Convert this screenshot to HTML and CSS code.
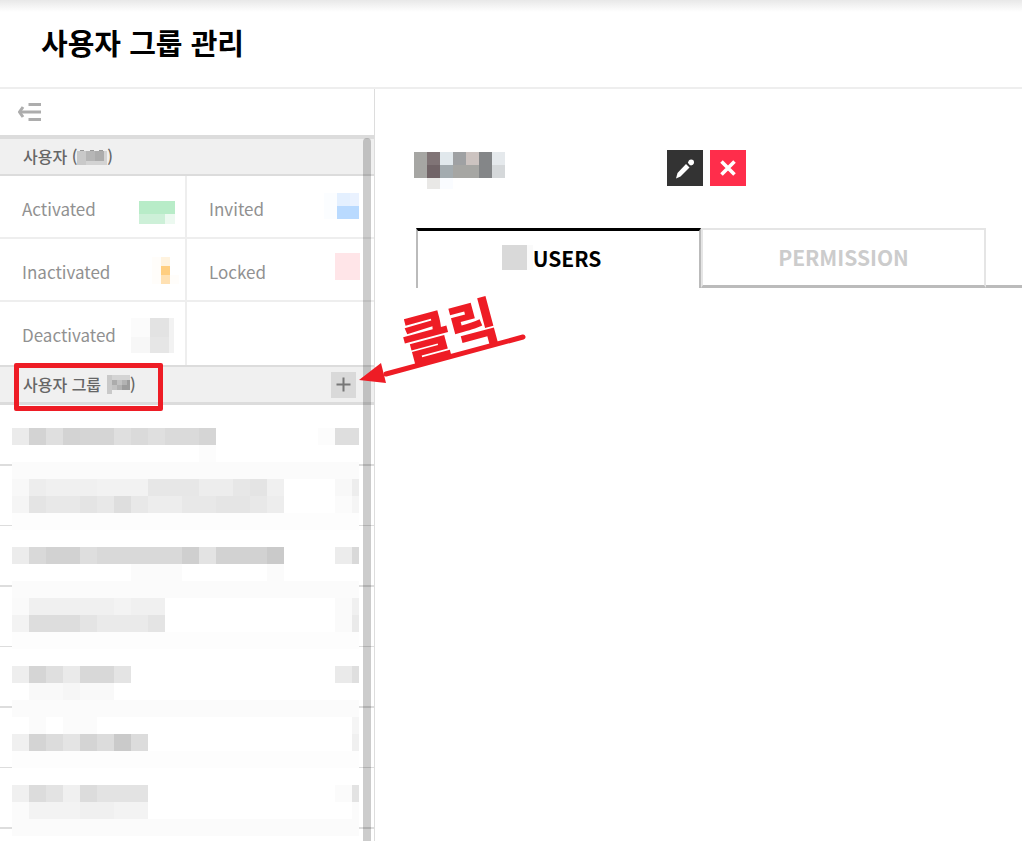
FILE: index.html
```
<!DOCTYPE html>
<html lang="ko">
<head>
    <meta charset="UTF-8">
    <meta name="viewport" content="width=device-width, initial-scale=1.0">
    <title>사용자 그룹 관리</title>
    <link rel="stylesheet" href="styles.css">
</head>
<body>
    <header class="page-header">
        <h1>사용자 그룹 관리</h1>
    </header>

    <div class="layout">
        <aside class="sidebar">
            <div class="sidebar-tools">
                <button class="collapse-btn" type="button" aria-label="Collapse">
                    <svg width="24" height="20" viewBox="0 0 24 20" fill="none" stroke="#adadad" stroke-width="3">
                        <path d="M10.500 2.500h12.500M3 10h20M10.500 17.500h12.500"/>
                        <path d="M5 5L1.500 10l3.500 5"/>
                    </svg>
                </button>
            </div>

            <div class="panel">
                <h2 class="panel-title first">
                    <span>사용자 (</span>
                    <svg class="mosaic" width="30" height="16" viewBox="0 0 30 16">
                        <path fill="#c9c9c9" d="M0 2h9v14H0z"/>
                        <path fill="#b6b6b6" d="M9 2h9v10H9z"/>
                        <path fill="#acacac" d="M18 2h9v10h-9z"/>
                        <path fill="#d3d3d3" d="M9 12h21v4H9zM27 2h3v10h-3z"/>
                        <path fill="#999" d="M3 1h4v1H3zM13 1h4v1h-4zM22 1h4v1h-4z"/>
                    </svg>
                    <span>)</span>
                </h2>
                <div class="status-grid">
                    <a class="status" href="#activated">Activated
                        <svg class="mosaic" width="60" height="61" viewBox="0 0 60 61">
                            <path fill="#b8ecc8" d="M14 25h36v13H14z"/>
                            <path fill="#cdf0d8" d="M14 38h26v10H14z"/>
                            <path fill="#ecf9f0" d="M40 38h10v10H40z"/>
                        </svg>
                    </a>
                    <a class="status" href="#invited">Invited
                        <svg class="mosaic" width="60" height="61" viewBox="0 0 60 61">
                            <path fill="#fbfdff" d="M24 17h13v26H24z"/>
                            <path fill="#e4f0ff" d="M37 17h13v13H37z"/>
                            <path fill="#eaf2ff" d="M50 17h9v13h-9z"/>
                            <path fill="#b9daff" d="M37 30h22v13H37z"/>
                        </svg>
                    </a>
                    <a class="status" href="#inactivated">Inactivated
                        <svg class="mosaic" width="60" height="61" viewBox="0 0 60 61">
                            <path fill="#fffdfa" d="M27 18h9v27h-9zM45 36h9v9h-9z"/>
                            <path fill="#fff3df" d="M36 18h9v9h-9z"/>
                            <path fill="#ffce80" d="M36 27h9v9h-9z"/>
                            <path fill="#ffe1b3" d="M36 36h9v9h-9z"/>
                        </svg>
                    </a>
                    <a class="status" href="#locked">Locked
                        <svg class="mosaic" width="60" height="61" viewBox="0 0 60 61">
                            <path fill="#ffe5e8" d="M35 14h25v27H35z"/>
                        </svg>
                    </a>
                    <a class="status" href="#deactivated">Deactivated
                        <svg class="mosaic" width="60" height="61" viewBox="0 0 60 61">
                            <path fill="#fbfbfb" d="M6 16h19v19H6z"/>
                            <path fill="#f7f7f7" d="M6 35h19v16H6z"/>
                            <path fill="#e3e3e3" d="M25 16h19v19H25z"/>
                            <path fill="#e6e6e6" d="M25 35h19v16H25z"/>
                            <path fill="#f2f2f2" d="M44 16h5v35h-5z"/>
                        </svg>
                    </a>
                    <div class="status"></div>
                </div>

                <h2 class="panel-title groups">
                    <span>사용자 그룹</span>
                    <svg class="mosaic group-count" width="23" height="19" viewBox="0 0 23 19">
                        <path fill="#c9c9c9" d="M0 0h5v19H0zM15 14h8v1h-8z"/>
                        <path fill="#d4d4d4" d="M5 0h18v5H5z"/>
                        <path fill="#acacac" d="M5 5h5v5H5z"/>
                        <path fill="#c2c2c2" d="M10 5h5v5h-5zM5 10h5v5H5z"/>
                        <path fill="#b2b2b2" d="M15 5h5v5h-5zM10 10h5v5h-5z"/>
                        <path fill="#9c9c9c" d="M15 10h8v5h-8zM20 5h3v5h-3z"/>
                    </svg>
                    <span>)</span>
                    <button class="add-btn" type="button" aria-label="Add group">
                        <svg width="15" height="15" viewBox="0 0 15 15" stroke="#777" stroke-width="2">
                            <path d="M7.500 0.500v14M0.500 7.500h14"/>
                        </svg>
                    </button>
                    <span class="highlight"></span>
                </h2>

                <div class="group-area">
                    <ul class="group-list">
                        <li></li>
                        <li></li>
                        <li></li>
                        <li></li>
                        <li></li>
                        <li></li>
                        <li></li>
                    </ul>
                    <!-- masked group names, one unit per block -->
                    <svg class="mosaic group-mask" width="347" height="425" viewBox="0 0 347 425">
                        <path fill="#fff" d="M0 0h347v425H0z"/>
                        <g transform="scale(17)">
                            <path stroke="#fbfbfb" d="M0 3.500h21M0 10.500h21M0 17.500h21M0 24.500h21"/>
                            <path stroke="#fdfdfd" d="M0 6.500h21M0 13.500h21M0 20.500h21"/>

                            <path stroke="#ebebeb" d="M0 1.500h1"/>
                            <path stroke="#d3d3d3" d="M1 1.500h1M3 1.500h1"/>
                            <path stroke="#dfdfdf" d="M2 1.500h1M6 1.500h1M8 1.500h1"/>
                            <path stroke="#d5d5d5" d="M4 1.500h2M11 1.500h1"/>
                            <path stroke="#dadada" d="M7 1.500h1M9 1.500h2"/>
                            <path stroke="#fcfcfc" d="M11 2.500h1M18 1.500h1"/>
                            <path stroke="#dedede" d="M19 1.500h2"/>

                            <path stroke="#f8f8f8" d="M0 4.500h1M19 4.500h1"/>
                            <path stroke="#ededed" d="M1 4.500h1M11 4.500h2M20 4.500h1M8 5.500h2M15 5.500h1"/>
                            <path stroke="#f0f0f0" d="M2 4.500h3M15 4.500h1"/>
                            <path stroke="#f2f2f2" d="M5 4.500h3"/>
                            <path stroke="#e7e7e7" d="M8 4.500h3M13 4.500h1"/>
                            <path stroke="#e4e4e4" d="M14 4.500h1M1 5.500h1M4 5.500h1"/>
                            <path stroke="#f5f5f5" d="M0 5.500h1M20 5.500h1"/>
                            <path stroke="#e8e8e8" d="M2 5.500h2M5 5.500h1M7 5.500h1M10 5.500h2M14 5.500h1"/>
                            <path stroke="#dedede" d="M6 5.500h1"/>
                            <path stroke="#e5e5e5" d="M12 5.500h2"/>
                            <path stroke="#fbfbfb" d="M19 5.500h1"/>

                            <path stroke="#ececec" d="M0 8.500h1M19 8.500h1"/>
                            <path stroke="#d9d9d9" d="M1 8.500h1M5 8.500h5M20 8.500h1"/>
                            <path stroke="#d2d2d2" d="M2 8.500h2M12 8.500h3"/>
                            <path stroke="#dedede" d="M4 8.500h1"/>
                            <path stroke="#cfcfcf" d="M10 8.500h1"/>
                            <path stroke="#e3e3e3" d="M11 8.500h1"/>
                            <path stroke="#cacaca" d="M15 8.500h1"/>
                            <path stroke="#fbfbfb" d="M7 9.500h3M15 9.500h1"/>

                            <path stroke="#fafafa" d="M0 11.500h1M19 11.500h1M19 12.500h1"/>
                            <path stroke="#f0f0f0" d="M1 11.500h8M20 11.500h1"/>
                            <path stroke="#f3f3f3" d="M6 11.500h1M0 12.500h1"/>
                            <path stroke="#dddddd" d="M1 12.500h3"/>
                            <path stroke="#e4e4e4" d="M4 12.500h1M8 12.500h1"/>
                            <path stroke="#eaeaea" d="M5 12.500h3M20 12.500h1"/>

                            <path stroke="#eeeeee" d="M0 15.500h1"/>
                            <path stroke="#d5d5d5" d="M1 15.500h1"/>
                            <path stroke="#dfdfdf" d="M2 15.500h1M20 15.500h1"/>
                            <path stroke="#eaeaea" d="M3 15.500h1M19 15.500h1"/>
                            <path stroke="#d8d8d8" d="M4 15.500h2"/>
                            <path stroke="#e4e4e4" d="M6 15.500h1"/>
                            <path stroke="#f9f9f9" d="M1 16.500h5"/>
                            <path stroke="#f6f6f6" d="M3 16.500h1"/>

                            <path stroke="#fbfbfb" d="M1 18.500h1M3 18.500h2"/>
                            <path stroke="#f5f5f5" d="M20 18.500h1"/>
                            <path stroke="#f0f0f0" d="M0 19.500h1M20 19.500h1"/>
                            <path stroke="#d4d4d4" d="M1 19.500h1M4 19.500h1"/>
                            <path stroke="#dcdcdc" d="M2 19.500h1M5 19.500h1M7 19.500h1"/>
                            <path stroke="#e4e4e4" d="M3 19.500h1"/>
                            <path stroke="#cacaca" d="M6 19.500h1"/>

                            <path stroke="#f0f0f0" d="M0 22.500h1M3 22.500h1M4 23.500h2"/>
                            <path stroke="#dcdcdc" d="M1 22.500h1M4 22.500h1"/>
                            <path stroke="#e3e3e3" d="M2 22.500h1M5 22.500h3M20 22.500h1"/>
                            <path stroke="#fbfbfb" d="M0 23.500h1M19 22.500h1M20 23.500h1"/>
                            <path stroke="#f3f3f3" d="M1 23.500h3M6 23.500h2"/>
                        </g>
                    </svg>
                </div>
                <div class="scrollbar"></div>
            </div>
        </aside>

        <main class="content">
            <div class="group-head">
                <svg class="mosaic" width="91" height="39" viewBox="0 -2 91 39">
                    <path fill="#a6a6a3" d="M0 0h13v26H0zM39 13h26v13H39z"/>
                    <path fill="#807476" d="M13 0h13v13H13z"/>
                    <path fill="#716467" d="M13 13h13v13H13z"/>
                    <path fill="#e1e8ec" d="M26 0h13v13H26z"/>
                    <path fill="#a3abaf" d="M26 13h13v13H26z"/>
                    <path fill="#9fa1a3" d="M39 0h13v13H39z"/>
                    <path fill="#ccc3c0" d="M52 0h13v13H52z"/>
                    <path fill="#848688" d="M65 0h13v26H65z"/>
                    <path fill="#e5e9ec" d="M78 0h13v13H78z"/>
                    <path fill="#d5d8da" d="M78 13h13v13H78z"/>
                    <path fill="#e9e8e6" d="M13 26h13v11H13z"/>
                    <path fill="#fafcff" d="M26 26h13v11H26z"/>
                </svg>
                <div class="actions">
                    <button class="icon-btn edit" type="button" aria-label="Edit">
                        <svg width="36" height="36" viewBox="0 0 36 36" fill="#fff">
                            <path d="M9 28.500l1.500-5.500L19 14l3.500 3.500L13.500 26.500z"/>
                            <circle cx="24.200" cy="12.200" r="2.800"/>
                            <path d="M20.800 12.600l1.400-1.400 3.200 3.200-1.400 1.400z"/>
                        </svg>
                    </button>
                    <button class="icon-btn delete" type="button" aria-label="Delete">
                        <svg width="36" height="36" viewBox="0 0 36 36" stroke="#fff" stroke-width="3.600">
                            <path d="M11.500 11.500l13 13M24.500 11.500l-13 13"/>
                        </svg>
                    </button>
                </div>
            </div>

            <nav class="tabs">
                <button class="tab active" type="button">
                    <svg class="mosaic" width="31" height="25" viewBox="0 0 31 25">
                        <path fill="#d9d9d9" d="M0 0h25v25H0z"/>
                        <path fill="#fafafa" d="M25 0h6v25h-6z"/>
                    </svg>
                    <span>USERS</span>
                </button>
                <button class="tab" type="button">PERMISSION</button>
            </nav>
        </main>
    </div>

    <!-- callout pointing at the add button -->
    <svg class="callout" width="180" height="110" viewBox="0 0 180 110">
        <text class="callout-text" transform="translate(48 83) rotate(-15)">클릭</text>
        <path d="M26 94L163 57" stroke="#ee1c25" stroke-width="5" stroke-linecap="round"/>
        <path d="M-1 100L21 83l5 20z" fill="#ee1c25"/>
    </svg>
</body>
</html>
```

FILE: styles.css
```
* {
    box-sizing: border-box;
}

body {
    margin: 0;
    min-height: 100vh;
    display: flex;
    flex-direction: column;
    position: relative;
    background-color: #fff;
    color: #000;
    font-family: "Noto Sans CJK KR", sans-serif;
}

button {
    padding: 0;
    border: none;
    background: none;
    font-family: inherit;
    cursor: pointer;
}

svg {
    display: block;
    flex: none;
}

.mosaic {
    shape-rendering: crispEdges;
}

.page-header {
    padding: 20px 41px 23px;
    border-bottom: 2px solid #eee;
    background: linear-gradient(#e8e8e8, #fff 12px);
}

h1 {
    margin: 0;
    font-size: 29px;
    line-height: 44px;
    font-weight: 700;
}

.layout {
    flex: 1;
    display: flex;
}

/* sidebar */
.sidebar {
    flex: none;
    width: 375px;
    display: flex;
    flex-direction: column;
    border-right: 1px solid #ddd;
}

.sidebar-tools {
    padding: 13px 18px;
}

.collapse-btn {
    display: block;
}

.panel {
    flex: 1;
    position: relative;
    border-top: 4px solid #dcdcdc;
}

.panel-title {
    display: flex;
    align-items: center;
    height: 37px;
    margin: 0;
    padding: 0 18px 0 23px;
    background-color: #f0f0f0;
    border-bottom: 2px solid #dcdcdc;
    color: #666;
    font-size: 16px;
    line-height: 24px;
    font-weight: 500;
}

.panel-title span {
    padding-bottom: 2px;
}

.panel-title.groups {
    position: relative;
    height: 40px;
    border-top: 2px solid #dcdcdc;
    border-bottom-width: 3px;
}

.group-count {
    margin-left: 6px;
}

.add-btn {
    display: flex;
    align-items: center;
    justify-content: center;
    width: 25px;
    height: 26px;
    margin-left: auto;
    background-color: #d9d9d9;
}

.highlight {
    position: absolute;
    left: 14px;
    top: -4px;
    width: 149px;
    height: 48px;
    border: 5px solid #ee1c25;
    border-radius: 2px;
}

.status-grid {
    display: grid;
    grid-template-columns: 187px 1fr;
}

.status {
    display: flex;
    justify-content: space-between;
    height: 63px;
    padding-left: 22px;
    border-bottom: 2px solid #eee;
    color: #919191;
    font-size: 17px;
    line-height: 66px;
    text-decoration: none;
}

.status:nth-child(odd) {
    border-right: 2px solid #eee;
}

.status:nth-child(even) {
    padding-right: 14px;
}

.status:nth-child(n+5) {
    border-bottom: none;
}

.group-area {
    position: relative;
}

.group-list {
    margin: 0;
    padding: 0;
    list-style: none;
}

.group-list li {
    height: 60px;
    border-bottom: 1px solid #ddd;
}

.group-list li:nth-child(odd) {
    height: 61px;
    border-bottom-width: 2px;
}

.group-mask {
    position: absolute;
    left: 12px;
    top: 6px;
}

.scrollbar {
    position: absolute;
    top: -1px;
    right: 3px;
    bottom: 0;
    width: 8px;
    border-radius: 4px 4px 0 0;
    background-color: rgba(0, 0, 0, 0.2);
}

/* content */
.content {
    flex: 1;
    padding-top: 61px;
}

.group-head {
    display: flex;
    justify-content: space-between;
    align-items: flex-start;
    width: 371px;
    padding-left: 39px;
}

.actions {
    display: flex;
    gap: 7px;
}

.icon-btn {
    width: 36px;
    height: 36px;
}

.edit {
    background-color: #333;
}

.delete {
    background-color: #ff2d4b;
}

.tabs {
    display: flex;
    margin: 39px 0 0 41px;
}

.tabs::after {
    content: "";
    flex: 1;
    border-bottom: 3px solid #bbb;
}

.tab {
    width: 285px;
    height: 60px;
    padding-bottom: 2px;
    border: 2px solid #e5e5e5;
    border-bottom: 3px solid #bbb;
    color: #ccc;
    font-size: 21px;
    font-weight: 700;
}

.tab.active {
    display: flex;
    align-items: center;
    justify-content: center;
    padding: 0 14px 4px 0;
    border: 2px solid #bbb;
    border-top: 3px solid #000;
    border-bottom: none;
    color: #000;
}

.callout {
    position: absolute;
    left: 360px;
    top: 280px;
    overflow: visible;
    pointer-events: none;
}

.callout-text {
    fill: #ee1c25;
    font-size: 53px;
    font-weight: 900;
}
```
